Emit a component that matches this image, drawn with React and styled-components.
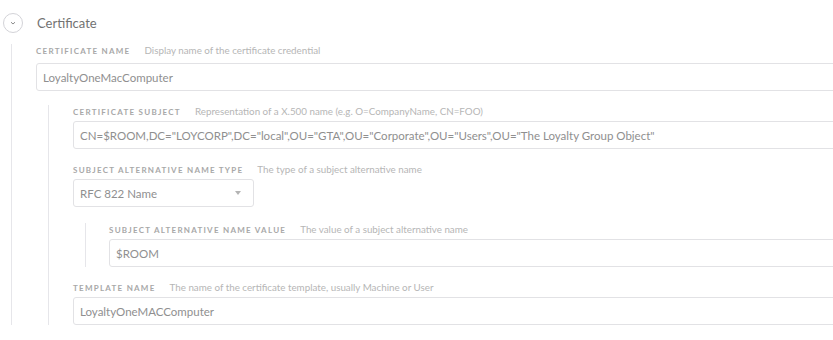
import React from 'react';
import styled, { createGlobalStyle } from 'styled-components';

const GlobalStyle = createGlobalStyle`
  html, body {
    margin: 0;
    padding: 0;
    background: #fff;
    overflow: hidden;
  }
  body {
    font-family: 'Lato', 'Liberation Sans', sans-serif;
  }
`;

const Page = styled.div`
  width: 880px;
  padding-top: 13px;
`;

const Header = styled.div`
  display: flex;
  align-items: center;
  height: 20px;
  padding-left: 3px;
`;

const Toggle = styled.button`
  display: flex;
  align-items: center;
  justify-content: center;
  width: 20px;
  height: 20px;
  padding: 0;
  border: 1px solid #d3d3d8;
  border-radius: 50%;
  background: #fff;
`;

const Title = styled.h3`
  margin: 0 0 0 14px;
  font-size: 13px;
  font-weight: 400;
  color: #727272;
`;

const Group = styled.div`
  display: flex;
  flex-direction: column;
  gap: 14px;
  margin-left: ${(p) => p.indent}px;
  margin-top: ${(p) => p.top}px;
  padding-left: ${(p) => p.pad}px;
  border-left: 1px solid #e6e6ea;
`;

const Field = styled.div`
  display: flex;
  flex-direction: column;
`;

const LabelRow = styled.div`
  display: flex;
  align-items: baseline;
  height: 12px;
  line-height: 12px;
  margin-bottom: ${(p) => p.gap}px;
`;

const Label = styled.span`
  font-size: 8px;
  font-weight: 700;
  letter-spacing: 1.25px;
  text-transform: uppercase;
  color: #a8a8a8;
`;

const Hint = styled.span`
  margin-left: 14px;
  font-size: 9.8px;
  color: #b6b6b6;
`;

const Input = styled.div`
  box-sizing: border-box;
  display: flex;
  align-items: center;
  height: 28px;
  width: ${(p) => (p.narrow ? '181px' : '100%')};
  padding: 0 12px 0 6px;
  border: 1px solid #e2e2e5;
  border-radius: 3px;
  font-size: 11.5px;
  color: #8f8f8f;
  white-space: nowrap;
`;

const Caret = styled.span`
  margin-left: auto;
  width: 0;
  height: 0;
  border-left: 3px solid transparent;
  border-right: 3px solid transparent;
  border-top: 4px solid #b4b4b4;
`;

const FormField = ({ label, hint, value, gap = 4, select }) => (
  <Field>
    <LabelRow gap={gap}>
      <Label>{label}</Label>
      <Hint>{hint}</Hint>
    </LabelRow>
    <Input narrow={select}>
      {value}
      {select && <Caret />}
    </Input>
  </Field>
);

const App = () => (
  <Page>
    <GlobalStyle />
    <Header>
      <Toggle>
        <svg width="8" height="6" viewBox="0 0 8 6">
          <path d="M2 2.2 L4 4 L6 2.2" fill="none" stroke="#8a8a8a" strokeWidth="1" />
        </svg>
      </Toggle>
      <Title>Certificate</Title>
    </Header>
    <Group indent={11} top={11} pad={24}>
      <FormField
        label="Certificate Name"
        hint="Display name of the certificate credential"
        value="LoyaltyOneMacComputer"
        gap={7}
      />
      <Group indent={12} top={0} pad={24}>
        <FormField
          label="Certificate Subject"
          hint="Representation of a X.500 name (e.g. O=CompanyName, CN=FOO)"
          value={'CN=$ROOM,DC="LOYCORP",DC="local",OU="GTA",OU="Corporate",OU="Users",OU="The Loyalty Group Object"'}
        />
        <FormField
          label="Subject Alternative Name Type"
          hint="The type of a subject alternative name"
          value="RFC 822 Name"
          select
        />
        <Group indent={12} top={2} pad={23}>
          <FormField
            label="Subject Alternative Name Value"
            hint="The value of a subject alternative name"
            value="$ROOM"
          />
        </Group>
        <FormField
          label="Template Name"
          hint="The name of the certificate template, usually Machine or User"
          value="LoyaltyOneMACComputer"
        />
      </Group>
    </Group>
  </Page>
);

export default App;
